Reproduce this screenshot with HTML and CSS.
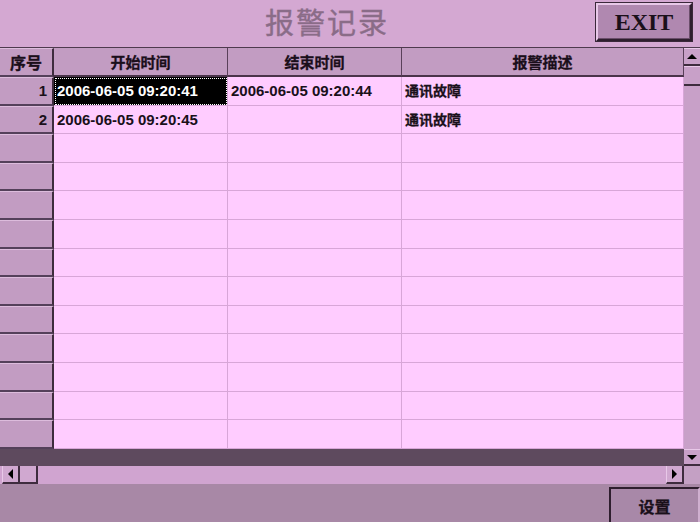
FILE: index.html
```html
<!DOCTYPE html>
<html lang="zh">
<head>
    <meta charset="UTF-8">
    <title>报警记录</title>
    <link rel="stylesheet" href="styles.css">
</head>
<body>
    <div class="screen">
        <div class="titlebar">
            <div class="title">报警记录</div>
            <button class="exit">EXIT</button>
        </div>

        <div class="main">
            <div class="sheet">
                <div class="grid">
                    <div class="hd rh">序号</div>
                    <div class="hd">开始时间</div>
                    <div class="hd">结束时间</div>
                    <div class="hd">报警描述</div>

                    <div class="rh num">1</div>
                    <div class="cell sel">2006-06-05 09:20:41</div>
                    <div class="cell">2006-06-05 09:20:44</div>
                    <div class="cell cn">通讯故障</div>

                    <div class="rh num">2</div>
                    <div class="cell">2006-06-05 09:20:45</div>
                    <div class="cell"></div>
                    <div class="cell cn">通讯故障</div>

                    <div class="rh"></div><div class="cell"></div><div class="cell"></div><div class="cell"></div>
                    <div class="rh"></div><div class="cell"></div><div class="cell"></div><div class="cell"></div>
                    <div class="rh"></div><div class="cell"></div><div class="cell"></div><div class="cell"></div>
                    <div class="rh"></div><div class="cell"></div><div class="cell"></div><div class="cell"></div>
                    <div class="rh"></div><div class="cell"></div><div class="cell"></div><div class="cell"></div>
                    <div class="rh"></div><div class="cell"></div><div class="cell"></div><div class="cell"></div>
                    <div class="rh"></div><div class="cell"></div><div class="cell"></div><div class="cell"></div>
                    <div class="rh"></div><div class="cell"></div><div class="cell"></div><div class="cell"></div>
                    <div class="rh"></div><div class="cell"></div><div class="cell"></div><div class="cell"></div>
                    <div class="rh"></div><div class="cell"></div><div class="cell"></div><div class="cell"></div>
                    <div class="rh"></div><div class="cell"></div><div class="cell"></div><div class="cell"></div>
                </div>
                <div class="empty"></div>
            </div>
            <div class="vscroll">
                <div class="sbtn"><span class="arr up"></span></div>
                <div class="thumb"></div>
                <div class="track"></div>
                <div class="sbtn"><span class="arr down"></span></div>
            </div>
        </div>

        <div class="hscroll">
            <div class="hbtn"><span class="arr left"></span></div>
            <div class="hthumb"></div>
            <div class="htrack"></div>
            <div class="hbtn"><span class="arr right"></span></div>
            <div class="corner"></div>
        </div>

        <div class="footer">
            <button class="setbtn">设置</button>
        </div>
    </div>
</body>
</html>
```

FILE: styles.css
```css
body { margin: 0; background: #a888a6; }
.screen { width: 700px; height: 522px; display: flex; flex-direction: column; overflow: hidden; }

.titlebar { height: 48px; flex: none; background: #d4a8d2; display: flex; align-items: flex-start; border-bottom: 1px solid #4e3a4e; box-sizing: border-box; }
.title { flex: 1; text-align: center; padding-left: 58px; font-family: "Noto Sans CJK SC", sans-serif; font-size: 29px; line-height: 42px; color: #8a6c88; letter-spacing: 2px; -webkit-text-stroke: 0.4px #8a6c88; }
.exit { margin: 3px 8px 0 0; width: 96px; height: 38px; background: #b088b0; border: 2px solid #2e1e2e; border-top-color: #e8c8e8; border-left-color: #e8c8e8; box-shadow: inset -1px -1px 0 #6a4e6a, 0 0 0 1px #3a283a; font-family: "Liberation Serif", serif; font-weight: bold; font-size: 24px; color: #1a101a; padding: 0; }

.main { display: flex; height: 418px; flex: none; }
.sheet { width: 684px; display: flex; flex-direction: column; background: #5e4a5e; }
.grid { display: grid; grid-template-columns: 54px 174px 174px 282px; grid-template-rows: 29px repeat(13, 28.6px); }
.hd { background: #c29cc2; border-right: 1px solid #5a405a; border-bottom: 2px solid #4a344a; font-family: "Noto Sans CJK SC", sans-serif; font-weight: bold; font-size: 15px; color: #1a0e1a; text-align: center; line-height: 27px; -webkit-text-stroke: 0.3px #1a0e1a; }
.hd.rh { font-size: 16px; }
.rh { background: #c29cc2; border-right: 2px solid #3e2c3e; border-bottom: 2px solid #54405a; border-top: 1px solid #dcbcdc; box-sizing: border-box; }
.num { text-align: right; padding-right: 5px; font-family: "Liberation Sans", sans-serif; font-weight: bold; font-size: 15px; line-height: 25px; color: #1a101a; }
.cell { background: #ffccff; border-right: 1px solid #d8a6d8; border-bottom: 1px solid #d8a6d8; font-family: "Liberation Sans", sans-serif; font-weight: bold; font-size: 15px; line-height: 27px; color: #1a101a; padding-left: 3px; white-space: nowrap; overflow: hidden; }
.cell.cn { font-family: "Noto Sans CJK SC", sans-serif; font-size: 14px; -webkit-text-stroke: 0.3px #1a101a; }
.cell.sel { background: #000; color: #fff; outline: 1px dotted #fff; outline-offset: -2px; }
.empty { flex: 1; }

.vscroll { width: 16px; display: flex; flex-direction: column; background: #c8a0c8; }
.sbtn { height: 18px; background: #c8a0c8; border-bottom: 2px solid #3e2c3e; border-top: 1px solid #e8c8e8; box-sizing: border-box; display: flex; align-items: center; justify-content: center; }
.vscroll .sbtn:last-child { height: 17px; }
.thumb { height: 20px; background: #c8a0c8; border-bottom: 2px solid #3e2c3e; border-top: 1px solid #e8c8e8; box-sizing: border-box; }
.track { flex: 1; background: #c8a0c8; }

.arr { width: 0; height: 0; border: 5px solid transparent; }
.arr.up { border-bottom-color: #000; border-top: 0; }
.arr.down { border-top-color: #000; border-bottom: 0; }
.arr.left { border-right-color: #000; border-left: 0; }
.arr.right { border-left-color: #000; border-right: 0; }

.hscroll { height: 18px; flex: none; display: flex; background: #d0a4d0; }
.hbtn { width: 18px; background: #d0a8d0; border-right: 2px solid #3e2c3e; border-bottom: 2px solid #3e2c3e; border-left: 1px solid #e8c8e8; box-sizing: border-box; display: flex; align-items: center; justify-content: center; }
.hscroll .hbtn:first-child { margin-left: 2px; }
.hthumb { width: 18px; background: #d0a8d0; border-right: 2px solid #3e2c3e; border-bottom: 2px solid #3e2c3e; box-sizing: border-box; }
.htrack { flex: 1; }
.corner { width: 16px; background: #c4a0c4; }

.footer { flex: 1; background: #a888a6; display: flex; justify-content: flex-end; align-items: flex-end; }
.setbtn { width: 91px; height: 35px; background: #a888a8; border: 2px solid #2e1e2e; border-right-color: #d0b0d0; border-bottom: 0; padding: 0; font-family: "Noto Sans CJK SC", sans-serif; font-weight: bold; font-size: 16px; color: #1a101a; -webkit-text-stroke: 0.3px #1a101a; }
```
